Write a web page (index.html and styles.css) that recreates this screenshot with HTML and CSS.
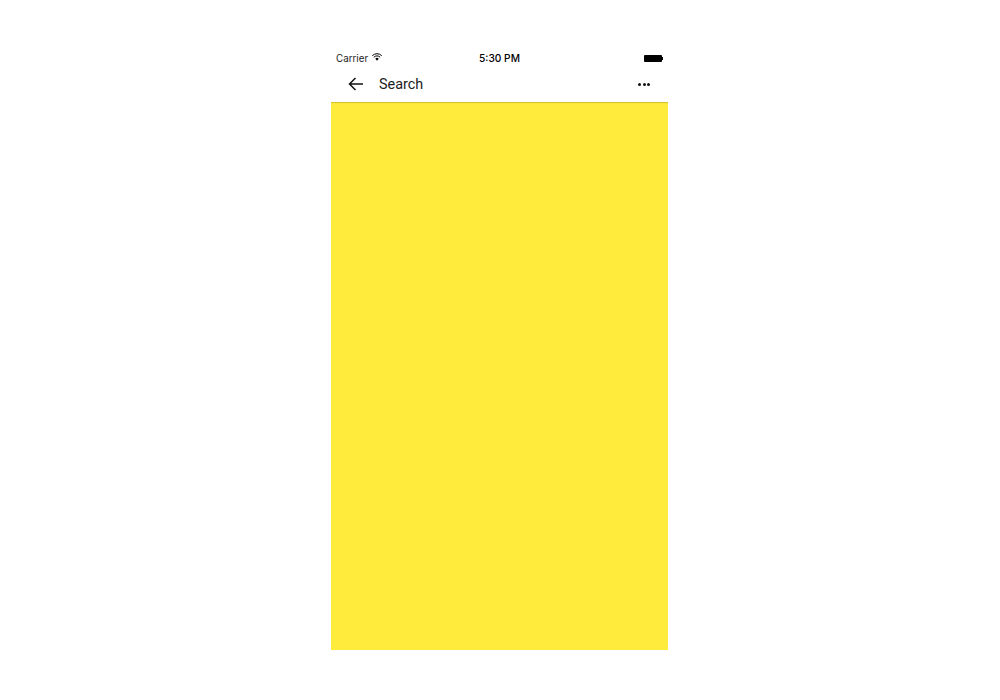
FILE: index.html
```html
<!DOCTYPE html>
<html>
<head>
    <title>Search</title>
    <link rel="stylesheet" href="styles.css">
</head>
<body>
    <div class="phone">
        <div class="status-bar">
            <div class="status-left">
                <span class="carrier">Carrier</span>
                <svg class="wifi" width="10" height="8" viewBox="0 0 11 8">
                    <path d="M0.3 2.6 A7.2 7.2 0 0 1 10.7 2.6" fill="none" stroke="#000" stroke-width="1.1"/>
                    <path d="M2 4.3 A4.8 4.8 0 0 1 9 4.3" fill="none" stroke="#000" stroke-width="1.1"/>
                    <path d="M3.6 5.9 L5.5 8 L7.4 5.9 A2.6 2.6 0 0 0 3.6 5.9 Z" fill="#000"/>
                </svg>
            </div>
            <div class="status-time">5:30 PM</div>
            <div class="status-right">
                <div class="battery"></div>
                <div class="battery-tip"></div>
            </div>
        </div>
        <div class="toolbar">
            <svg class="back" width="15" height="14" viewBox="0 0 15 14">
                <path d="M15 7 H1.5 M7.5 1 L1.5 7 L7.5 13" fill="none" stroke="#111" stroke-width="1.5"/>
            </svg>
            <span class="title">Search</span>
            <div class="more">
                <span class="dot"></span>
                <span class="dot"></span>
                <span class="dot"></span>
            </div>
        </div>
        <div class="content"></div>
    </div>
</body>
</html>
```

FILE: styles.css
```css
body, html {
    margin: 0;
    height: 100%;
    background-color: #fff;
    font-family: "Roboto", sans-serif;
}

.phone {
    width: 337px;
    margin-left: 331px;
    padding-top: 49px;
}

.status-bar {
    height: 18px;
    display: flex;
    align-items: center;
    justify-content: space-between;
    padding: 0 5px;
    color: #000;
}

.status-left {
    display: flex;
    align-items: center;
    gap: 4px;
    width: 100px;
}

.carrier {
    font-family: "Inter", sans-serif;
    font-size: 9.8px;
    color: #222;
}

.wifi {
    display: block;
    margin-top: -2px;
}

.status-time {
    font-family: "Inter", sans-serif;
    font-size: 10.2px;
    font-weight: 500;
}

.status-right {
    width: 100px;
    display: flex;
    align-items: center;
    justify-content: flex-end;
}

.battery {
    width: 18px;
    height: 7px;
    background-color: #000;
    border-radius: 1px;
}

.battery-tip {
    width: 1px;
    height: 3px;
    background-color: #000;
}

.toolbar {
    height: 35px;
    display: flex;
    align-items: center;
    padding: 0 18px 0 17px;
}

.back {
    display: block;
    margin-top: -1px;
}

.title {
    margin-left: 16px;
    font-size: 14.4px;
    color: #212121;
    flex: 1;
}

.more {
    display: flex;
    gap: 1.5px;
}

.dot {
    width: 3px;
    height: 3px;
    border-radius: 50%;
    background-color: #111;
}

.content {
    height: 548px;
    background-color: #ffeb3b;
    box-shadow: inset 0 2px 1px -1px rgba(0, 0, 0, 0.18);
}
```
